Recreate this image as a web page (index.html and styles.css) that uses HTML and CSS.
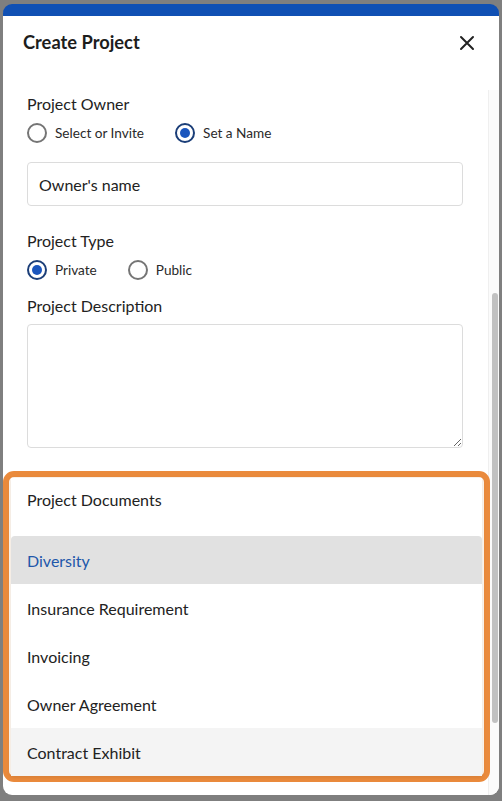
FILE: index.html
```html
<!DOCTYPE html>
<html lang="en">

<head>
    <meta charset="UTF-8" />
    <meta name="viewport" content="width=device-width, initial-scale=1.0" />
    <title>Create Project</title>
    <link rel="stylesheet" href="styles.css">
</head>

<body>

    <div class="modal">
        <div class="modal-head">
            <h2 class="modal-title">Create Project</h2>
            <button class="close-btn" aria-label="Close">
                <svg width="16" height="16" viewBox="0 0 16 16">
                    <path d="M2 2 L14 14 M14 2 L2 14" stroke="#222" stroke-width="2" stroke-linecap="round" />
                </svg>
            </button>
        </div>

        <div class="modal-body">
            <div class="form">
                <p class="field-label">Project Owner</p>
                <div class="radio-row">
                    <label class="radio"><span class="radio-dot"></span>Select or Invite</label>
                    <label class="radio"><span class="radio-dot checked"></span>Set a Name</label>
                </div>
                <div class="text-input">Owner's name</div>

                <p class="field-label type-label">Project Type</p>
                <div class="radio-row">
                    <label class="radio"><span class="radio-dot checked"></span>Private</label>
                    <label class="radio"><span class="radio-dot"></span>Public</label>
                </div>

                <p class="field-label desc-label">Project Description</p>
                <textarea class="text-area"></textarea>

                <div class="footer">
                    <button class="btn">Cancel</button>
                    <button class="btn">Create</button>
                </div>
            </div>

            <div class="scrollbar">
                <div class="scroll-thumb"></div>
            </div>
        </div>

        <!-- подсветка выпадающего списка -->
        <div class="highlight">
            <div class="dropdown">
                <div class="dropdown-head">Project Documents</div>
                <div class="dropdown-item selected">Diversity</div>
                <div class="dropdown-item">Insurance Requirement</div>
                <div class="dropdown-item">Invoicing</div>
                <div class="dropdown-item">Owner Agreement</div>
                <div class="dropdown-item hovered">Contract Exhibit</div>
            </div>
        </div>
    </div>

</body>

</html>
```

FILE: styles.css
```css
* {
    box-sizing: border-box;
}

body {
    font-family: Lato, "Open Sans", sans-serif;
    margin: 0;
    padding: 4px 3px 0;
    height: 801px;
    overflow: hidden;
    background: #7f7f7f;
    color: #222;
}

.modal {
    position: relative;
    display: flex;
    flex-direction: column;
    width: 496px;
    height: 791px;
    background: white;
    border-top: 12px solid #1050b4;
    border-radius: 9px;
    overflow: hidden;
}

.modal-head {
    display: flex;
    justify-content: space-between;
    align-items: flex-start;
    height: 74px;
    padding: 14px 24px 0 20px;
}

.modal-title {
    margin: 0;
    font-size: 18.3px;
    line-height: 24px;
    font-weight: bold;
    color: #1d1d1d;
}

.close-btn {
    border: none;
    background: none;
    padding: 0;
    margin-top: 5px;
    width: 16px;
    height: 16px;
}

.modal-body {
    display: flex;
    flex: 1;
    min-height: 0;
}

.form {
    flex: 1;
    padding: 4px 25px 0 24px;
}

.field-label {
    margin: 0;
    font-size: 16px;
    line-height: 20px;
}

.type-label {
    margin-top: 25px;
}

.desc-label {
    margin-top: 16px;
}

.radio-row {
    display: flex;
    gap: 31px;
    margin-top: 9px;
    height: 20px;
}

.radio {
    display: flex;
    align-items: center;
    gap: 8px;
    font-size: 13.6px;
    color: #2a2a2a;
}

.radio-dot {
    width: 20px;
    height: 20px;
    border-radius: 50%;
    border: 2px solid #757575;
    position: relative;
}

.radio-dot.checked {
    border-color: #1b3e78;
}

.radio-dot.checked::after {
    content: "";
    position: absolute;
    left: 3px;
    top: 3px;
    width: 10px;
    height: 10px;
    border-radius: 50%;
    background: #1a55bd;
}

.text-input {
    margin-top: 19px;
    height: 44px;
    border: 1px solid #dcdcdc;
    border-radius: 4px;
    padding: 0 11px;
    display: flex;
    align-items: center;
    font-size: 16px;
    color: #222;
}

.text-area {
    display: block;
    margin-top: 8px;
    width: 100%;
    height: 124px;
    border: 1px solid #dcdcdc;
    border-radius: 4px;
    font-family: inherit;
}

.footer {
    display: flex;
    justify-content: center;
    gap: 12px;
    margin-top: 30px;
}

.btn {
    width: 78px;
    height: 36px;
    border: 1px solid #555;
    border-radius: 4px;
    background: white;
    font-family: inherit;
}

.scrollbar {
    width: 11px;
    border-left: 1px solid #efefef;
    background: #fbfbfb;
    padding: 203px 1px 0 3px;
}

.scroll-thumb {
    width: 6px;
    height: 430px;
    border-radius: 3px;
    background: #c1c1c1;
}

.highlight {
    position: absolute;
    left: 0;
    top: 455px;
    width: 487px;
    border: 6px solid #ea8a3c;
    border-radius: 11px;
    padding: 1px 2px 0 2px;
    background: #fff7ef;
}

.dropdown {
    background: white;
    box-shadow: 0 1px 4px rgba(0, 0, 0, 0.1);
}

.dropdown-head {
    height: 58px;
    padding: 12px 16px 0;
    font-size: 16px;
    line-height: 20px;
    box-shadow: 0 6px 8px -6px rgba(0, 0, 0, 0.06);
}

.dropdown-item {
    height: 48px;
    padding: 0 16px;
    display: flex;
    align-items: center;
    font-size: 16px;
    color: #222;
}

.dropdown-item.selected {
    background: #e1e1e1;
    color: #2157aa;
    border-radius: 4px 4px 0 0;
}

.dropdown-item.hovered {
    background: #f4f4f4;
}
```
